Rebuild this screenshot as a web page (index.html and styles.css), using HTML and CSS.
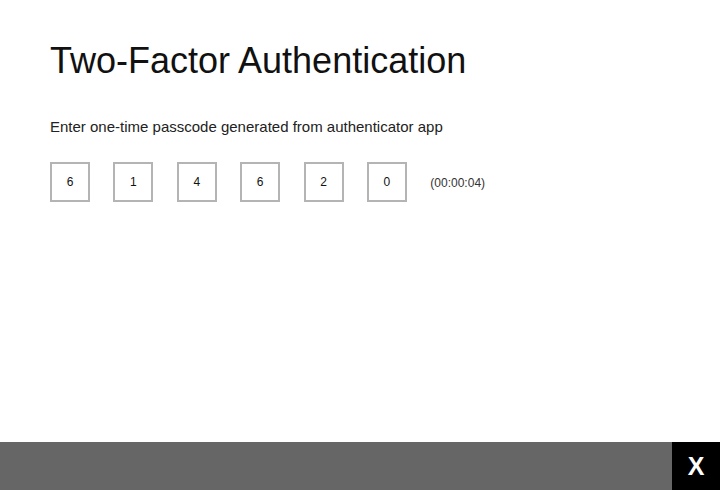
FILE: index.html
```html
<!DOCTYPE html>
<html>
<head>
<meta charset="utf-8">
<link rel="stylesheet" href="styles.css">
</head>
<body>
<main class="content">
  <h1 class="title">Two-Factor Authentication</h1>
  <p class="prompt">Enter one-time passcode generated from authenticator app</p>
  <div class="code-row">
    <div class="digit">6</div>
    <div class="digit">1</div>
    <div class="digit">4</div>
    <div class="digit">6</div>
    <div class="digit">2</div>
    <div class="digit">0</div>
    <span class="timer">(00:00:04)</span>
  </div>
</main>
<footer class="bar">
  <div class="close">X</div>
</footer>
</body>
</html>
```

FILE: styles.css
```css
html, body {
  margin: 0;
  padding: 0;
  height: 100%;
}
body {
  font-family: "Liberation Sans", Arial, sans-serif;
  color: #111;
  background: #fff;
  display: flex;
  flex-direction: column;
  width: 720px;
  height: 490px;
  overflow: hidden;
}
.content {
  flex: 1;
  padding: 41px 50px 0 50px;
}
.title {
  margin: 0;
  font-size: 36px;
  font-weight: normal;
  line-height: 40px;
  color: #111;
}
.prompt {
  margin: 37px 0 0 0;
  font-size: 15px;
  line-height: 18px;
  color: #222;
}
.code-row {
  display: flex;
  align-items: center;
  gap: 23.4px;
  margin-top: 26px;
}
.digit {
  width: 36px;
  height: 36px;
  border: 2px solid #b4b4b4;
  display: flex;
  align-items: center;
  justify-content: center;
  font-size: 12px;
  color: #111;
}
.timer {
  font-size: 12px;
  color: #333;
  margin-top: 2px;
}
.bar {
  height: 48px;
  background: #666;
  display: flex;
  justify-content: flex-end;
}
.close {
  width: 48px;
  height: 48px;
  background: #000;
  color: #fff;
  font-weight: bold;
  font-size: 25px;
  display: flex;
  align-items: center;
  justify-content: center;
}
```
